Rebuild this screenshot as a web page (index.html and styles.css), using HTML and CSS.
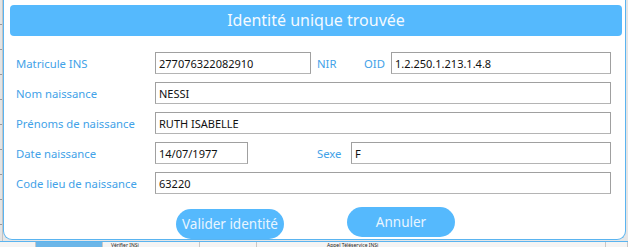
FILE: index.html
```html
<!DOCTYPE html>
<html lang="fr">
<head>
  <meta charset="UTF-8" />
  <title>Identité unique trouvée</title>
  <link rel="stylesheet" href="styles.css">
</head>
<body>
  <div class="page">
    <div class="side"></div>
    <div class="dialog">
      <div class="title">Identité unique trouvée</div>
      <div class="form">
        <div class="row">
          <label class="label">Matricule INS</label>
          <input class="field w-ins" value="277076322082910">
          <span class="label-inline nir">NIR</span>
          <span class="label-inline oid">OID</span>
          <input class="field grow" value="1.2.250.1.213.1.4.8">
        </div>
        <div class="row">
          <label class="label">Nom naissance</label>
          <input class="field grow" value="NESSI">
        </div>
        <div class="row">
          <label class="label">Prénoms de naissance</label>
          <input class="field grow" value="RUTH ISABELLE">
        </div>
        <div class="row">
          <label class="label">Date naissance</label>
          <input class="field w-date" value="14/07/1977">
          <span class="label-inline sexe">Sexe</span>
          <input class="field grow" value="F">
        </div>
        <div class="row">
          <label class="label">Code lieu de naissance</label>
          <input class="field grow" value="63220">
        </div>
      </div>
      <div class="buttons">
        <button class="btn btn-ok">Valider identité</button>
        <button class="btn btn-cancel">Annuler</button>
      </div>
    </div>
  </div>
  <div class="under">
    <div class="cell c1"></div>
    <div class="cell c2"></div>
    <div class="cell c3">Vérifier INSi</div>
    <div class="cell c4"></div>
    <div class="cell c5">Appel Téléservice INSi</div>
    <div class="cell c6"></div>
  </div>
</body>
</html>
```
FILE: styles.css
```css
body {
  margin: 0;
  width: 628px;
  height: 247px;
  overflow: hidden;
  background-color: #e6e6e6;
  font-family: 'Noto Sans', 'Open Sans', sans-serif;
}

.page {
  display: flex;
  height: 241px;
}

.side {
  width: 2px;
  background: repeating-linear-gradient(#e4e4e4 0 24px, #9a9a9a 24px 25px);
  border-right: 1px solid #c4c4c4;
}

.dialog {
  width: 623px;
  height: 240px;
  box-sizing: border-box;
  background-color: #ffffff;
  border: 1px solid #5ab4f0;
  border-top: none;
  border-radius: 0 0 9px 9px;
  padding: 5px 3px 0 6px;
  display: flex;
  flex-direction: column;
}

.title {
  height: 31px;
  background-color: #55b9fd;
  border-radius: 4px;
  color: #f4faff;
  font-size: 16px;
  line-height: 31px;
  text-align: center;
}

.form {
  display: flex;
  flex-direction: column;
  gap: 8px;
  padding: 16px 11px 0 6px;
}

.row {
  display: flex;
  align-items: center;
  height: 22px;
}

.label {
  width: 139px;
  color: #42a2e8;
  font-size: 11.3px;
}

.label-inline {
  color: #42a2e8;
  font-size: 11.3px;
}

.nir {
  margin-left: 6px;
  width: 47px;
}

.oid {
  width: 27px;
}

.sexe {
  margin-left: 69px;
  width: 34px;
}

.field {
  height: 22px;
  box-sizing: border-box;
  border: 1px solid #a0a0a0;
  border-bottom-color: #b4b4b4;
  padding: 0 3px;
  font-family: 'Noto Sans', 'Open Sans', sans-serif;
  font-size: 11px;
  color: #111111;
  background-color: #ffffff;
  outline: none;
}

.w-ins {
  width: 156px;
}

.w-date {
  width: 93px;
}

.grow {
  flex: 1;
  min-width: 0;
}

.buttons {
  display: flex;
  gap: 63px;
  padding-left: 166px;
  margin-top: 13px;
  align-items: flex-start;
}

.btn {
  width: 108px;
  height: 30px;
  border: none;
  border-radius: 15px;
  background-color: #55b9fd;
  color: #e9f5ff;
  font-family: 'Noto Sans', 'Open Sans', sans-serif;
  font-size: 13.5px;
  padding: 0;
}

.btn-ok {
  margin-top: 2px;
}

.under {
  display: flex;
  height: 6px;
  background-color: #f4f4f4;
  border-top: 1px solid #5ab4f0;
  overflow: hidden;
}

.cell {
  border-right: 1px solid #c8c8c8;
  font-size: 5px;
  line-height: 6px;
  color: #222222;
  text-indent: 8px;
  overflow: hidden;
  white-space: nowrap;
}

.c1 { width: 35px; }
.c2 { width: 66px; background-color: #6cb6e8; }
.c3 { width: 96px; }
.c4 { width: 56px; }
.c5 { width: 348px; text-indent: 70px; }
.c6 { flex: 1; }
```
